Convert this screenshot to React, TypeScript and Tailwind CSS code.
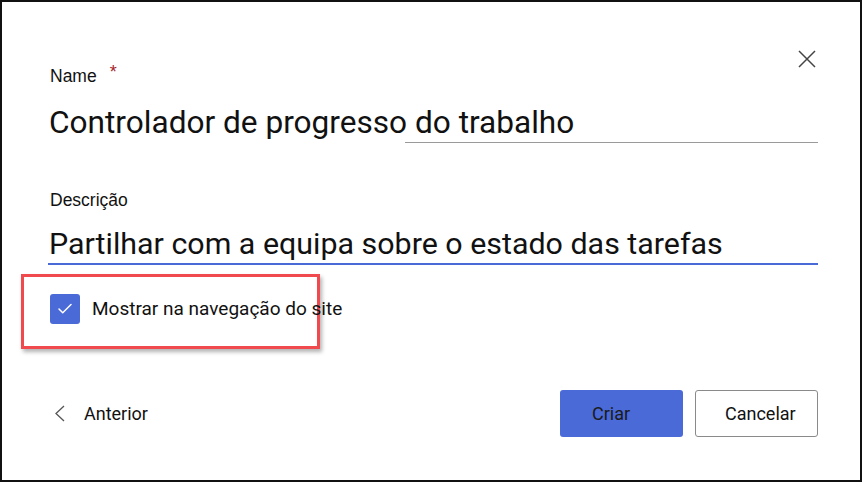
import { Check } from 'lucide-react'

export default function App() {
  return (
    <div className="w-[862px] h-[482px] bg-white border-2 border-[#111] font-['Roboto',sans-serif] text-[#111]">
      <div className="flex flex-col pl-[46px] pr-[42px] pt-[48px]">
        {/* Header: name label + close */}
        <div className="flex items-start justify-between">
          <div className="mt-[16px] flex items-start text-[17.5px] leading-[20px] font-['Liberation_Sans',sans-serif]">
            <span className="pl-[2px]">Name</span>
            <span className="ml-[13px] -mt-[4px] text-[#a4262c] text-[18px]">*</span>
          </div>
          <button className="mr-[2px] p-0">
            <svg width="18" height="18" viewBox="0 0 18 18" fill="none" stroke="#444" strokeWidth="1.5">
              <path d="M1 1 L17 17 M17 1 L1 17" />
            </svg>
          </button>
        </div>

        {/* Title */}
        <div className="mt-[17px] h-[39px] text-[31.6px] leading-[39px] pl-[1px] whitespace-nowrap">
          Controlador de progresso do trabalho
        </div>
        <div className="ml-[357px] h-px bg-[#9a9a9a]" />

        {/* Descrição */}
        <div className="mt-[47px] text-[17.5px] leading-[20px] pl-[2px] font-['Liberation_Sans',sans-serif]">
          Descrição
        </div>
        <div className="mt-[14px] h-[39px] text-[30.4px] leading-[39px] pl-[1px] whitespace-nowrap">
          Partilhar com a equipa sobre o estado das tarefas
        </div>
        <div className="h-[2px] bg-[#4a6ad8]" />

        {/* Show in site navigation (highlighted) */}
        <div className="mt-[9px] ml-[-27px] w-[299px] h-[75px] border-[3px] border-[#f04a4f] shadow-[2px_3px_4px_rgba(0,0,0,0.3)] pl-[26px] pt-[17px]">
          <div className="flex items-center gap-[12px] whitespace-nowrap">
            <div className="w-[30px] h-[30px] shrink-0 rounded-[3px] bg-[#4a6ad8] flex items-center justify-center">
              <Check className="w-[18px] h-[18px] text-white" strokeWidth={2} />
            </div>
            <span className="text-[19px] leading-[24px]">Mostrar na navegação do site</span>
          </div>
        </div>

        {/* Footer */}
        <div className="mt-[41px] flex items-center justify-between">
          <button className="flex items-center pl-[6px] text-[18px] leading-[20px]">
            <svg width="11" height="17" viewBox="0 0 11 17" fill="none" stroke="#555" strokeWidth="1.3">
              <path d="M10 1 L2 8.5 L10 16" />
            </svg>
            <span className="ml-[19px]">Anterior</span>
          </button>
          <div className="flex items-center gap-[12px]">
            <button className="w-[123px] h-[47px] rounded-[3px] bg-[#4a6ad8] text-[18px] text-[#1a1a1a] text-left pl-[32px]">
              Criar
            </button>
            <button className="w-[123px] h-[47px] rounded-[3px] border border-[#8a8a8a] bg-white text-[18px] text-[#111] text-left pl-[29px]">
              Cancelar
            </button>
          </div>
        </div>
      </div>
    </div>
  )
}
